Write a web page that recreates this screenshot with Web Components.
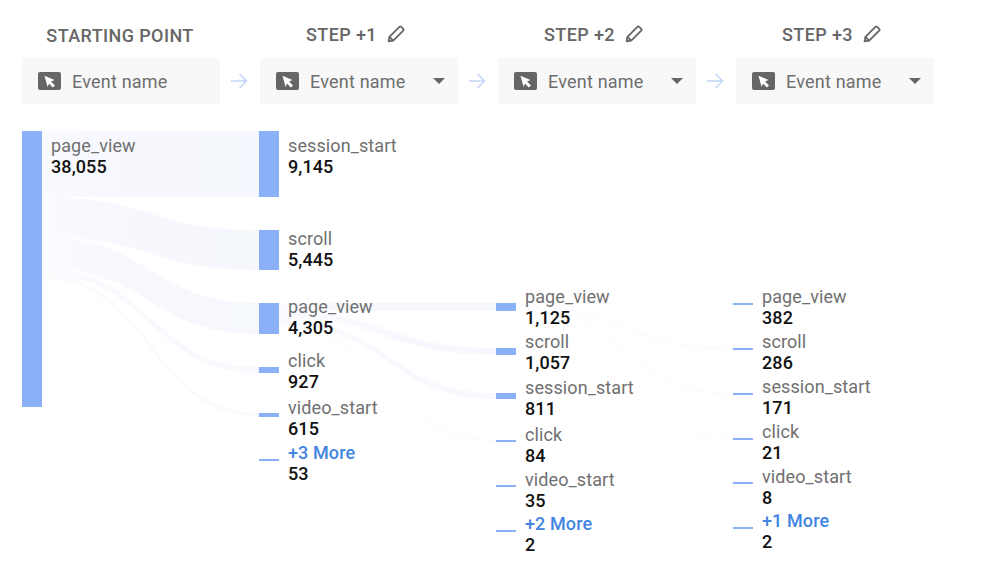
<!DOCTYPE html>
<html lang="en">
<head>
<meta charset="utf-8">
<title>Funnel</title>
<style>
html,body{margin:0;padding:0;background:#fff;}
body{font-family:Roboto,"Liberation Sans",sans-serif;width:1000px;height:583px;overflow:hidden;}
</style>
</head>
<body>
<path-explorer></path-explorer>
<template id="step-tpl">
<style>
:host{display:flex;flex-direction:column;width:198px;flex:none;}
.title{height:36px;box-sizing:border-box;display:flex;align-items:center;justify-content:center;gap:10px;font-size:18px;font-weight:500;color:#666;letter-spacing:.4px;white-space:nowrap;padding:0 7px 12px 0;}
:host([start]) .title{padding:0 2px 10px 0;}
.title svg{width:18px;height:18px;flex:none;}
.box{height:46px;background:#f8f8f8;display:flex;align-items:center;padding:0 13px 0 16px;gap:11px;font-size:18px;letter-spacing:.2px;color:#6e6e6e;}
.box .cur{width:23px;height:18px;flex:none;}
.name{flex:1;white-space:nowrap;}
.caret{width:0;height:0;border-left:6.5px solid transparent;border-right:6.5px solid transparent;border-top:6.5px solid #666;}
:host([start]) .caret,:host([start]) .pen{display:none;}
</style>
<div class="title"><span><slot name="title"></slot></span>
<svg class="pen" viewBox="0 0 18 18" fill="none" stroke="#666" stroke-width="1.8" stroke-linejoin="round"><path d="M1.6 16.4 2.4 11.8 12.4 1.8a1.3 1.3 0 0 1 1.8 0l2 2a1.3 1.3 0 0 1 0 1.8L6.2 15.6Z"/><path d="M2.4 11.8 6.2 15.6"/></svg></div>
<div class="box">
<svg class="cur" viewBox="0 0 23 18"><rect width="23" height="18" rx="2" fill="#666"/><path d="M6.5 3.7 16.5 8 13 9.6 17 13.4 14.8 15.4 11 11.6 9.6 15Z" fill="#fff"/></svg>
<span class="name"><slot></slot></span><span class="caret"></span></div>
</template>
<template id="arrow-tpl">
<style>:host{display:flex;align-items:flex-end;justify-content:center;width:40px;height:82px;flex:none;}
svg{width:18px;height:16px;margin:0 2px 15px 0;}</style>
<svg viewBox="0 0 18 16" fill="none" stroke="#c3d5f8" stroke-width="1.5"><path d="M1 8H16.5M9.5 1 16.5 8 9.5 15"/></svg>
</template>
<template id="node-tpl">
<style>
:host{position:absolute;display:block;width:1px;height:1px;}
.bar{position:absolute;left:0;width:19.5px;background:#8ab1f8;}
.text{position:absolute;left:29px;font-size:18px;line-height:21px;white-space:nowrap;color:#707070;letter-spacing:.1px;}
.v{display:block;font-weight:500;color:#111;}
.l{display:block;}
:host([more]) .l{font-weight:500;color:#4285e0;}
</style>
<div class="bar"></div><div class="text"><span class="l"></span><span class="v"></span></div>
</template>
<script>
function shell(el,id){const r=el.attachShadow({mode:'open'});r.appendChild(document.getElementById(id).content.cloneNode(true));return r;}
class FunnelStep extends HTMLElement{constructor(){super();shell(this,'step-tpl');}}
class FunnelArrow extends HTMLElement{constructor(){super();shell(this,'arrow-tpl');}}
class FunnelNode extends HTMLElement{
  constructor(){super();this.r=shell(this,'node-tpl');}
  connectedCallback(){
    const a=n=>this.getAttribute(n),b=this.r.querySelector('.bar'),t=this.r.querySelector('.text');
    const y=+a('y'),h=+a('h'),ty=+a('ty');
    this.style.left=a('x')+'px';this.style.top=y+'px';
    b.style.top='0';b.style.height=h+'px';
    t.style.top=(ty-y)+'px';
    this.r.querySelector('.l').textContent=a('label');
    this.r.querySelector('.v').textContent=a('value');
  }
}
class FunnelSankey extends HTMLElement{
  constructor(){super();
    const r=this.attachShadow({mode:'open'});
    const band=(x0,x1,a0,a1,b0,b1)=>{const m=(x0+x1)/2;return `M${x0} ${a0}C${m} ${a0} ${m} ${b0} ${x1} ${b0}L${x1} ${b1}C${m} ${b1} ${m} ${a1} ${x0} ${a1}Z`;};
    const L=[
      [41,259,131,197,131,197,.85],[41,259,197,237,230,270,.8],[41,259,237,268,303,334,.75],
      [41,259,268,274,367,373,.6],[41,259,274,278,413,416.5,.5],[41,259,278,280,459,460.5,.3],
      [278,496,303,311,303,311,.8],[278,496,311,318,348,355,.7],[278,496,318,324,393,399,.65],
      [278,496,324,325.5,440,441.5,.45],[278,496,325.5,327,485,486.5,.3],[278,496,327,328,530,531.5,.2],
      [515,733,303,304.5,303,304.5,.5],[515,733,304.5,306,348,349.5,.45],[515,733,306,307.5,393,394.5,.4],
      [515,733,307.5,309,438,439.5,.35],[515,733,309,310,482,483.5,.25],[515,733,310,311,527,528.5,.2]
    ];
    const paths=L.map(l=>`<path d="${band(l[0],l[1],l[2],l[3],l[4],l[5])}" fill="url(#g)" opacity="${l[6]}"/>`).join('');
    r.innerHTML=`<style>:host{display:block;position:relative;width:1000px;height:465px;margin-left:-22px;}
    svg{position:absolute;left:0;top:-118px;width:1000px;height:583px;}
    .nodes{position:absolute;left:0;top:-118px;}</style>
    <svg viewBox="0 0 1000 583" aria-hidden="true"><defs><linearGradient id="g"><stop offset="0" stop-color="#f4f6fd" stop-opacity=".6"/><stop offset=".45" stop-color="#f4f6fd"/><stop offset="1" stop-color="#f3f6fd"/></linearGradient></defs>${paths}</svg>
    <div class="nodes"><slot></slot></div>`;
  }
}
class PathExplorer extends HTMLElement{
  constructor(){super();
    const r=this.attachShadow({mode:'open'});
    r.innerHTML=`<style>:host{display:block;padding:22px 0 0 22px;}
    .head{display:flex;height:82px;margin-bottom:14px;}</style>
    <div class="head"><slot name="head"></slot></div><slot></slot>`;
    const step=(t,s)=>`<funnel-step slot="head"${s?' start':''}><span slot="title">${t}</span>Event name</funnel-step>`;
    const arr='<funnel-arrow slot="head"></funnel-arrow>';
    const c=[[22,[['page_view','38,055',131,276,135]]],
      [259,[['session_start','9,145',131,66,135],['scroll','5,445',230,40,228],['page_view','4,305',303,31,296],['click','927',367,6,350],['video_start','615',413,3.5,396.5],['+3 More','53',459,1.5,441.5,1]]],
      [496,[['page_view','1,125',303,8,286],['scroll','1,057',348,7,331],['session_start','811',393,6,376.5],['click','84',440,1.5,423.5],['video_start','35',485,1.5,468.5],['+2 More','2',530,1.5,512.5,1]]],
      [733,[['page_view','382',303,1.5,286],['scroll','286',348,1.5,331],['session_start','171',393,1.5,376],['click','21',438,1.5,421],['video_start','8',482,1.5,466],['+1 More','2',527,1.5,510,1]]]];
    let n='';
    for(const [x,list] of c)for(const d of list)n+=`<funnel-node x="${x}" label="${d[0]}" value="${d[1]}" y="${d[2]}" h="${d[3]}" ty="${d[4]}"${d[5]?' more':''}></funnel-node>`;
    this.innerHTML=step('STARTING POINT',1)+arr+step('STEP +1')+arr+step('STEP +2')+arr+step('STEP +3')+`<funnel-sankey>${n}</funnel-sankey>`;
  }
}
customElements.define('funnel-step',FunnelStep);
customElements.define('funnel-arrow',FunnelArrow);
customElements.define('funnel-node',FunnelNode);
customElements.define('funnel-sankey',FunnelSankey);
customElements.define('path-explorer',PathExplorer);
</script>
</body>
</html>
